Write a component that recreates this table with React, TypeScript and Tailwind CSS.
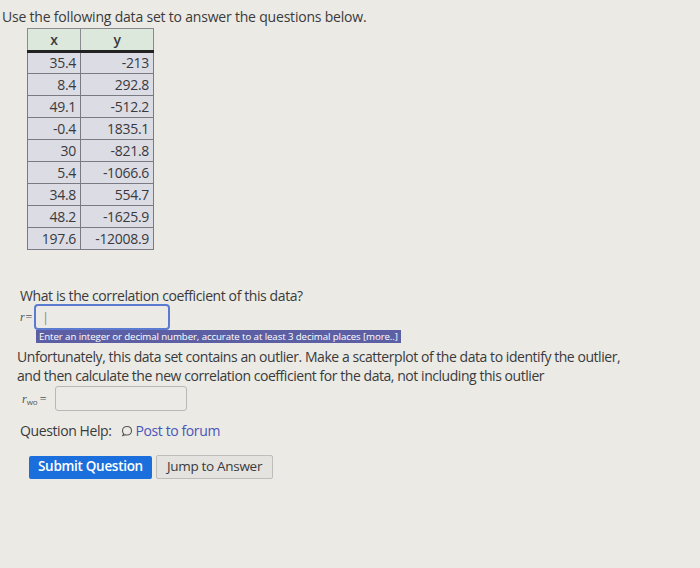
import React from "react";

const rows: [string, string][] = [
  ["35.4", "-213"],
  ["8.4", "292.8"],
  ["49.1", "-512.2"],
  ["-0.4", "1835.1"],
  ["30", "-821.8"],
  ["5.4", "-1066.6"],
  ["34.8", "554.7"],
  ["48.2", "-1625.9"],
  ["197.6", "-12008.9"],
];

export default function App() {
  return (
    <div
      className="w-[700px] h-[568px] bg-[#ebeae5] text-[#3a3a3c] overflow-hidden"
      style={{ fontFamily: '"Open Sans", "Noto Sans", sans-serif' }}
    >
      <div className="pl-[2px] pt-[7px] text-[14px] leading-[20px] tracking-[-0.2px]">
        Use the following data set to answer the questions below.
      </div>
      <table className="ml-[27px] mt-[1px] border-collapse text-[14px] leading-[20px] tracking-[-0.3px]">
        <thead>
          <tr className="bg-[#dde8dc]">
            <th className="w-[53px] h-[23px] border border-[#8a8a90] border-b-[3px] border-b-[#222] font-semibold text-center">x</th>
            <th className="w-[73px] h-[23px] border border-[#8a8a90] border-b-[3px] border-b-[#222] font-semibold text-center">y</th>
          </tr>
        </thead>
        <tbody>
          {rows.map(([x, y]) => (
            <tr key={x} className="bg-[#dcdce5]">
              <td className="h-[22px] border border-[#7a7a82] text-right pr-[4px]">{x}</td>
              <td className="h-[22px] border border-[#7a7a82] text-right pr-[4px]">{y}</td>
            </tr>
          ))}
        </tbody>
      </table>
      <div className="pl-[20px] mt-[36px] text-[14px] leading-[20px] tracking-[-0.4px]">
        What is the correlation coefficient of this data?
      </div>
      <div className="flex items-center pl-[20px] mt-[-2px]">
        <span className="italic text-[12px] text-[#555] w-[14px]" style={{ fontFamily: '"Liberation Serif", serif' }}>
          r=
        </span>
        <div className="w-[136px] h-[26px] border-2 border-[#5b7bd0] rounded-[4px] bg-[#eceae6] flex items-center pl-[6px]">
          <span className="text-[#888] text-[13px] leading-none">|</span>
        </div>
      </div>
      <div className="flex pl-[36px]">
        <span className="bg-[#5c5fa4] text-white text-[9.7px] leading-[13px] px-[3px] tracking-[-0.1px]">
          Enter an integer or decimal number, accurate to at least 3 decimal places [more..]
        </span>
      </div>
      <div className="pl-[17px] mt-[4px] text-[14px] leading-[19px] tracking-[-0.45px] w-[640px]">
        Unfortunately, this data set contains an outlier. Make a scatterplot of the data to identify the outlier,
        and then calculate the new correlation coefficient for the data, not including this outlier
      </div>
      <div className="flex items-center pl-[22px] mt-[1px]">
        <span className="relative text-[12px] text-[#555] w-[33px] italic" style={{ fontFamily: '"Liberation Serif", serif' }}>
          r
          <sub className="not-italic text-[8px]" style={{ fontFamily: '"Open Sans", sans-serif' }}>wo</sub>
          <span className="not-italic ml-[2px]">=</span>
        </span>
        <div className="w-[132px] h-[25px] border border-[#b8b8b8] rounded-[3px] bg-[#eceae6]" />
      </div>
      <div className="flex items-center pl-[20px] mt-[10px] text-[14px] leading-[20px] tracking-[-0.4px]">
        <span>Question Help:</span>
        <svg className="ml-[9px] mr-[3px]" width="12" height="12" viewBox="0 0 12 12" fill="none">
          <path d="M6 1.5c2.6 0 4.5 1.8 4.5 4.2S8.6 10 6 10c-.6 0-1.2-.1-1.7-.3L1.8 10.6l.8-2C1.9 7.9 1.5 6.9 1.5 5.7 1.5 3.3 3.4 1.5 6 1.5z" stroke="#555" strokeWidth="1.1" />
        </svg>
        <span className="text-[#4a55b8]">Post to forum</span>
      </div>
      <div className="flex items-center pl-[29px] mt-[14px] gap-[4px] text-[13.5px] tracking-[-0.3px]">
        <button className="h-[23px] px-[9px] bg-[#1b6fdc] text-white font-semibold rounded-[2px] leading-none">
          Submit Question
        </button>
        <button className="h-[24px] px-[10px] bg-[#e4e3df] text-[#3a3a3c] border border-[#bdbdbb] rounded-[2px] leading-none">
          Jump to Answer
        </button>
      </div>
    </div>
  );
}
